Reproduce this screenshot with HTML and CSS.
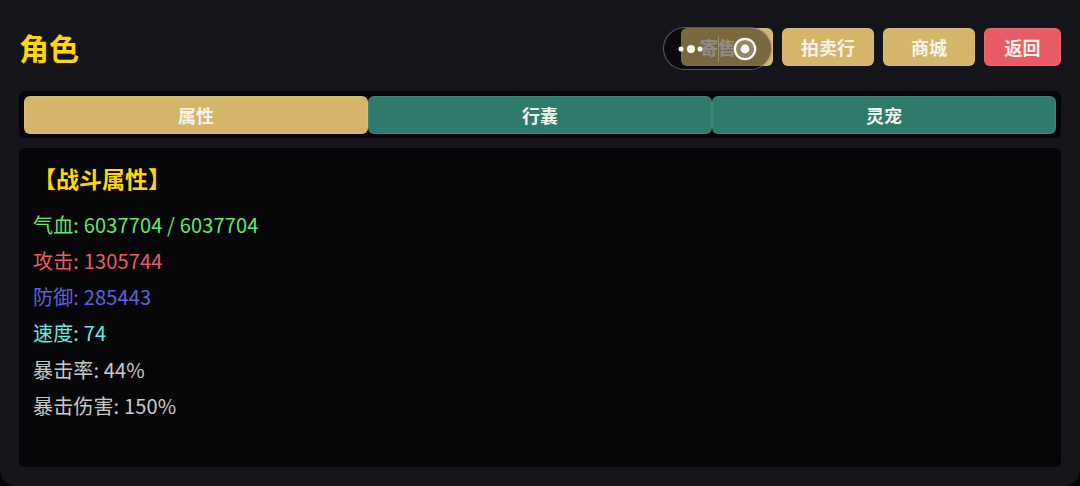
FILE: index.html
```html
<!DOCTYPE html>
<html lang="zh">
<head>
<meta charset="utf-8">
<title>角色</title>
<link rel="stylesheet" href="styles.css">
</head>
<body>
<div class="page">
  <header class="header">
    <h1 class="title">角色</h1>
    <div class="actions">
      <button class="btn btn-gold btn-wide btn-covered">寄售</button>
      <button class="btn btn-gold btn-wide">拍卖行</button>
      <button class="btn btn-gold btn-wide">商城</button>
      <button class="btn btn-red">返回</button>
    </div>
  </header>
  <nav class="tabs">
    <button class="tab tab-active">属性</button>
    <button class="tab">行囊</button>
    <button class="tab">灵宠</button>
  </nav>
  <main class="panel">
    <h2 class="section">【战斗属性】</h2>
    <p class="stat hp">气血: 6037704 / 6037704</p>
    <p class="stat atk">攻击: 1305744</p>
    <p class="stat def">防御: 285443</p>
    <p class="stat spd">速度: 74</p>
    <p class="stat">暴击率: 44%</p>
    <p class="stat">暴击伤害: 150%</p>
  </main>
  <div class="capsule">
    <svg class="capsule-icon" width="109" height="42" viewBox="0 0 109 42">
      <circle cx="17" cy="21" r="2.5" fill="#fff"/>
      <circle cx="27" cy="21" r="4" fill="#fff"/>
      <circle cx="36" cy="21" r="2.5" fill="#fff"/>
      <line x1="54.5" y1="8" x2="54.5" y2="34" stroke="#fff" stroke-opacity=".25"/>
      <circle cx="81" cy="21" r="10.2" fill="rgba(255,255,255,.2)" stroke="#fff" stroke-width="2.2"/>
      <circle cx="81" cy="21" r="4.4" fill="#fff"/>
    </svg>
  </div>
</div>
</body>
</html>
```

FILE: styles.css
```css
* { box-sizing: border-box; }
html, body { margin: 0; height: 100%; background: #050507; }
.page {
  position: relative;
  width: 1080px;
  height: 486px;
  padding: 28px 19px 19px;
  background: #14141a;
  border-radius: 0 0 16px 16px;
  display: flex;
  flex-direction: column;
  font-family: "Noto Sans CJK SC", "Noto Sans", sans-serif;
}
.header {
  height: 38px;
  display: flex;
  justify-content: space-between;
  align-items: center;
  margin-bottom: 25px;
}
.title {
  margin: 0;
  font-size: 30px;
  font-weight: 700;
  color: #ffd60a;
  line-height: 42px;
}
.actions { display: flex; gap: 9px; }
.btn {
  height: 38px;
  border: 1px solid rgba(255,255,255,.1);
  border-radius: 6px;
  font: 700 18px "Noto Sans CJK SC", sans-serif;
  color: #f6f3ec;
  padding: 0;
}
.btn-gold { background: #d4b56a; }
.btn-wide { width: 92px; }
.btn-covered { padding-right: 18px; }
.btn-red { background: #e85c63; width: 77px; }
.tabs {
  height: 47px;
  padding: 5px;
  display: flex;
  background: #060608;
  border-radius: 6px;
  margin-bottom: 10px;
}
.tab {
  flex: 1;
  height: 38px;
  border: 1px solid rgba(255,255,255,.08);
  border-radius: 6px;
  background: #2e7a6c;
  color: #f3f3ee;
  font: 700 18px/34px "Noto Sans CJK SC", sans-serif;
  padding: 0 0 1px;
}
.tab-active { background: #d4b56a; }
.panel {
  flex: 1;
  background: #060608;
  border-radius: 6px;
  padding: 12px 14px 0;
}
.section {
  margin: 0 0 10.5px;
  font-size: 23px;
  font-weight: 700;
  line-height: 36px;
  color: #ffd60a;
}
.stat {
  margin: 0;
  font-size: 20px;
  letter-spacing: .15px;
  line-height: 36.3px;
  color: #c9c9c9;
}
.hp { color: #62e86e; }
.atk { color: #ec5d63; }
.def { color: #5d62e0; }
.spd { color: #62ece6; }
.capsule {
  position: absolute;
  left: 663px;
  top: 27px;
  width: 109px;
  height: 43px;
  border: 1px solid rgba(255,255,255,.32);
  border-radius: 22px;
  background: rgba(0,0,0,.42);
}
.capsule-icon { display: block; }
```
